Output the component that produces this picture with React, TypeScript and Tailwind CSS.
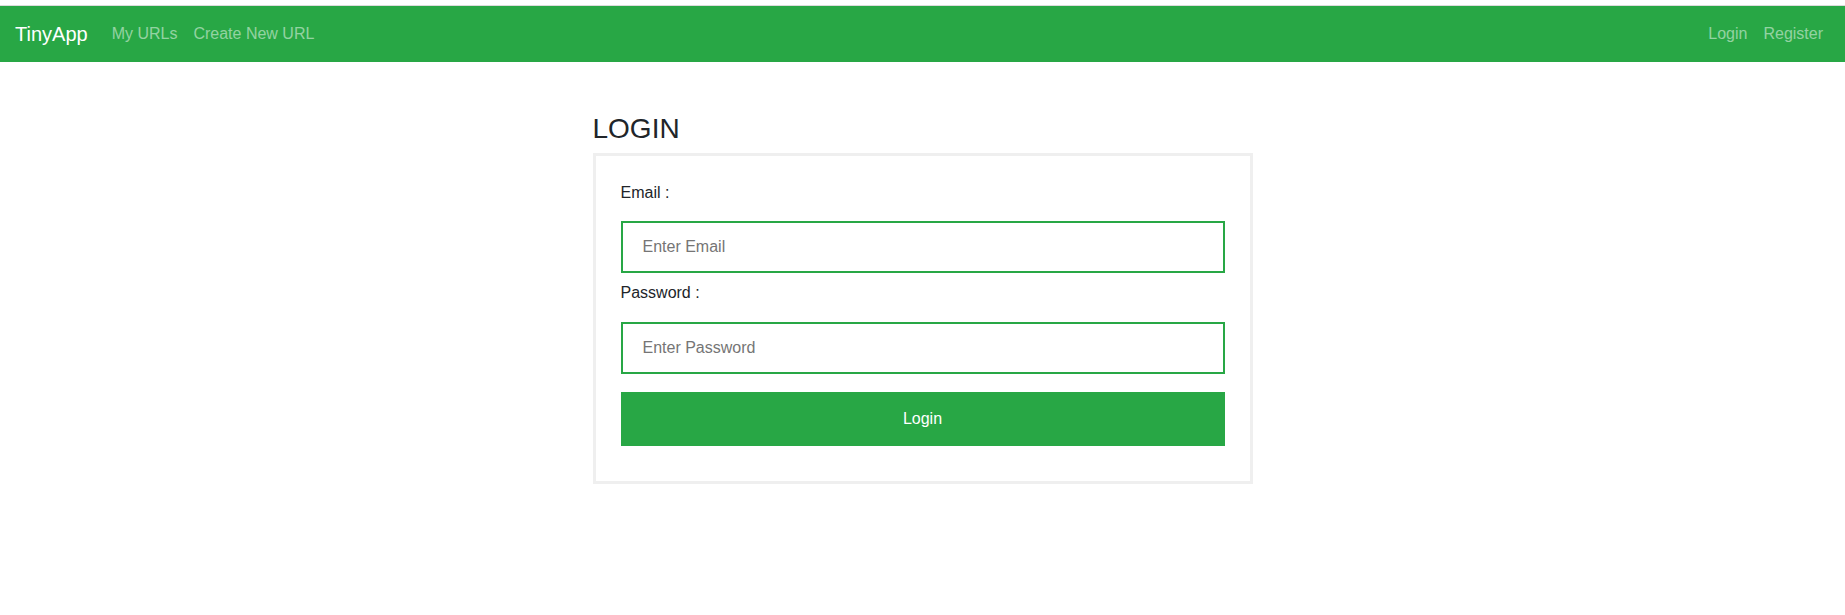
import { useState } from "react";

const Navbar = () => (
  <div className="pt-[5px] bg-white">
    <nav className="flex items-center justify-between h-[57px] border-t border-[#dcdcdc] bg-[#28a745] pl-[15px] pr-[14px]">
      <div className="flex items-center">
        <a href="#" className="text-[20px] leading-[30px] text-white mr-4">
          TinyApp
        </a>
        <a href="#" className="px-2 text-[16px] leading-6 text-white/50">
          My URLs
        </a>
        <a href="#" className="px-2 text-[16px] leading-6 text-white/50">
          Create New URL
        </a>
      </div>
      <div className="flex items-center">
        <a href="#" className="px-2 text-[16px] leading-6 text-white/50">
          Login
        </a>
        <a href="#" className="px-2 text-[16px] leading-6 text-white/50">
          Register
        </a>
      </div>
    </nav>
  </div>
);

const App = () => {
  const [email, setEmail] = useState("");
  const [password, setPassword] = useState("");

  return (
    <div
      className="min-h-[615px] bg-white text-[#212529]"
      style={{ fontFamily: '"Liberation Sans", Arial, sans-serif' }}
    >
      <Navbar />

      <div className="flex justify-center">
        <div className="w-[660px] mt-[50px]">
          <h3 className="text-[28px] leading-[1.2] font-normal mb-[7px]">LOGIN</h3>

          <form
            className="border-[3px] border-[#efefef] px-[25px] pt-[25px] pb-[35px]"
            onSubmit={(e) => e.preventDefault()}
          >
            <label className="block text-[16px] leading-6 mb-4">Email :</label>
            <input
              type="email"
              value={email}
              onChange={(e) => setEmail(e.target.value)}
              placeholder="Enter Email"
              className="block w-full h-[52px] border-2 border-[#28a745] px-5 text-[16px] outline-none placeholder:text-[#757575]"
            />

            <label className="block text-[16px] leading-6 mt-2 mb-[17px]">Password :</label>
            <input
              type="password"
              value={password}
              onChange={(e) => setPassword(e.target.value)}
              placeholder="Enter Password"
              className="block w-full h-[52px] border-2 border-[#28a745] px-5 text-[16px] outline-none placeholder:text-[#757575]"
            />

            <button
              type="submit"
              className="block w-full h-[54px] mt-[18px] bg-[#28a745] text-white text-[16px]"
            >
              Login
            </button>
          </form>
        </div>
      </div>
    </div>
  );
};

export default App;
